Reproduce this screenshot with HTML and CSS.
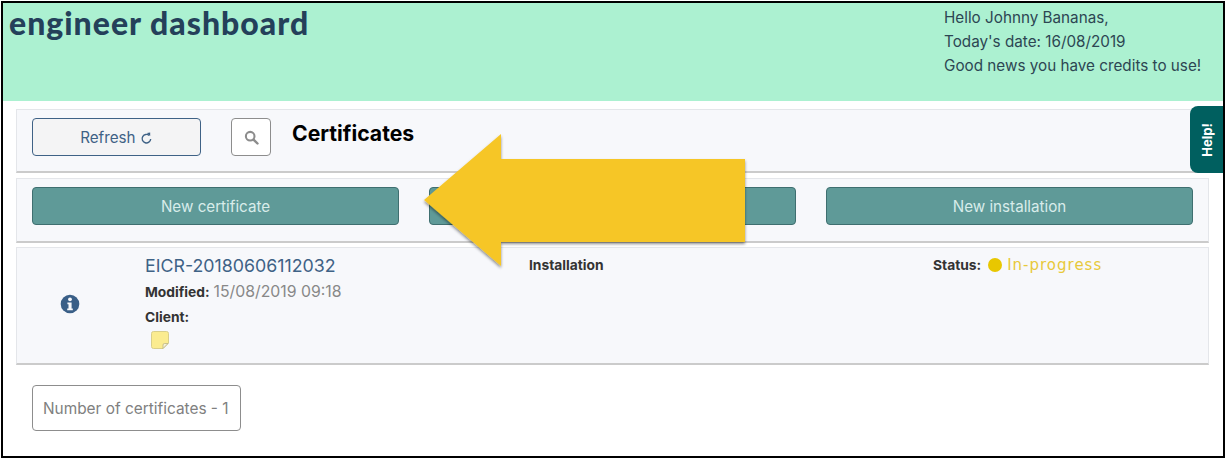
FILE: index.html
```html
<!DOCTYPE html>
<html>

<head>
  <title>Engineer dashboard</title>
  <link rel="stylesheet" href="styles.css">
</head>

<body>
  <div class="frame">
    <div class="top-header">
      <h1 class="brand">engineer dashboard</h1>
      <div class="greeting">
        <div>Hello Johnny Bananas,</div>
        <div>Today's date: 16/08/2019</div>
        <div>Good news you have credits to use!</div>
      </div>
    </div>

    <div class="content">
      <div class="panel toolbar">
        <button class="btn-refresh">Refresh
          <svg class="refresh-icon" viewBox="0 0 14 14" width="13" height="13">
            <path d="M11.5 7.5a4.6 4.6 0 1 1-1.5-3.7" fill="none" stroke="#3f6286" stroke-width="1.5" />
            <path d="M7.4 1.2l3.6-.6v3.8z" fill="#3f6286" />
          </svg>
        </button>
        <button class="btn-search">
          <svg viewBox="0 0 16 16" width="15" height="15">
            <circle cx="6.6" cy="6.6" r="4.6" fill="none" stroke="#8c8c8c" stroke-width="2.2" />
            <path d="M10.2 10.2l4.2 4.2" stroke="#8c8c8c" stroke-width="2.6" stroke-linecap="round" />
          </svg>
        </button>
        <h2 class="page-title">Certificates</h2>
      </div>

      <div class="panel actions">
        <button class="btn-new">New certificate</button>
        <button class="btn-new">New client</button>
        <button class="btn-new">New installation</button>
      </div>

      <div class="panel cert-row">
        <div class="cert-icon">
          <svg viewBox="0 0 20 20" width="20" height="20">
            <circle cx="10" cy="10" r="9.3" fill="#3a5f87" />
            <circle cx="10" cy="5.3" r="1.9" fill="#f7f8fa" />
            <path d="M7.4 8.4h4.2v6h1.2v1.8H7.2v-1.8h1.3v-4.2H7.4z" fill="#f7f8fa" />
          </svg>
        </div>
        <div class="cert-main">
          <a class="cert-name">EICR-20180606112032</a>
          <div class="cert-line"><b>Modified:</b> <span class="muted">15/08/2019 09:18</span></div>
          <div class="cert-line client"><b>Client:</b></div>
          <svg class="note" viewBox="0 0 18 18" width="18" height="18">
            <path d="M2.5 .5h13a2 2 0 0 1 2 2V12l-5.500 5.500h-9.500a2 2 0 0 1-2-2v-13a2 2 0 0 1 2-2z" fill="#fbec8f" stroke="#d9cf8a" />
            <path d="M17 12.500h-3.500a1.500 1.500 0 0 0-1.500 1.500v3.500z" fill="#f4f1d8" stroke="#b5ad7e" stroke-width=".7" />
          </svg>
        </div>
        <div class="cert-type"><b>Installation</b></div>
        <div class="cert-status">
          <b>Status:</b>
          <span class="dot"></span>
          <span class="status-text">In-progress</span>
        </div>
      </div>

      <div class="count-box">Number of certificates - 1</div>
    </div>

    <div class="help-tab"><span>Help!</span></div>

    <svg class="arrow" viewBox="0 0 340 150" width="340" height="150">
      <defs>
        <filter id="arrow-shadow" x="-5%" y="-5%" width="110%" height="115%">
          <feDropShadow dx="0" dy="2" stdDeviation="1.500" flood-color="#000" flood-opacity="0.45" />
        </filter>
      </defs>
      <path d="M4 68L81 2V27H325V110H81V134z" fill="#f6c628" filter="url(#arrow-shadow)" />
    </svg>
  </div>
</body>

</html>
```

FILE: styles.css
```css
* {
  box-sizing: border-box;
}

body {
  margin: 0;
  font-family: Inter, "Liberation Sans", sans-serif;
  color: #333;
  background-color: #fff;
}

.frame {
  position: relative;
  height: 457px;
  margin: 1px 2px 0 1px;
  border: 2px solid #000;
  overflow: hidden;
}

.top-header {
  display: flex;
  justify-content: space-between;
  height: 98px;
  padding-left: 6px;
  background-color: #acf1d1;
}

.brand {
  margin: 0;
  font-family: Lato, sans-serif;
  font-size: 32px;
  font-weight: 900;
  letter-spacing: 1px;
  line-height: 40px;
  color: #24405a;
}

.greeting {
  width: 279px;
  padding-top: 3px;
  font-size: 15.250px;
  line-height: 24px;
  color: #2d4653;
}

.content {
  padding: 8px 14px 0 13px;
}

.panel {
  background-color: #f7f8fb;
  border: 1px solid #e4e6ea;
  border-bottom: 2px solid #cbcbcb;
}

.toolbar {
  display: flex;
  align-items: flex-start;
  height: 64px;
  padding: 8px 15px;
}

.btn-refresh {
  width: 169px;
  height: 38px;
  font-family: inherit;
  font-size: 15.200px;
  color: #3f6286;
  background-color: #f4f4f5;
  border: 1px solid #3f6286;
  border-radius: 4px;
}

.refresh-icon {
  vertical-align: -2px;
}

.btn-search {
  display: flex;
  align-items: center;
  justify-content: center;
  width: 40px;
  height: 38px;
  margin-left: 30px;
  background-color: #fff;
  border: 1px solid #8d8d8d;
  border-radius: 4px;
}

.page-title {
  margin: 3px 0 0 21px;
  font-size: 21.200px;
  font-weight: bold;
  line-height: 24px;
  color: #000;
}

.actions {
  display: grid;
  grid-template-columns: 367px 367px 367px;
  gap: 30px;
  height: 65px;
  margin-top: 5px;
  padding: 8px 15px;
}

.btn-new {
  height: 38px;
  font-family: inherit;
  font-size: 15.200px;
  color: #d8ecea;
  background-color: #5f9a98;
  border: 1px solid #3f6f70;
  border-radius: 4px;
}

.cert-row {
  display: grid;
  grid-template-columns: 128px 384px 404px 1fr;
  height: 118px;
  margin-top: 4px;
  font-size: 13.800px;
}

.cert-icon {
  display: flex;
  align-items: center;
  justify-content: center;
  padding-right: 22px;
  padding-bottom: 4px;
}

.cert-main {
  padding-top: 7px;
}

.cert-name {
  display: block;
  font-size: 17.800px;
  line-height: 22px;
  color: #3f6286;
}

.cert-line {
  margin-top: 5px;
  line-height: 20px;
}

.cert-line.client {
  margin-top: 5px;
}

.muted {
  font-size: 15.800px;
  color: #888;
}

.note {
  display: block;
  margin: 4px 0 0 6px;
}

.cert-type {
  padding-top: 7px;
  line-height: 20px;
}

.cert-status {
  display: flex;
  align-items: center;
  height: 20px;
  margin-top: 7px;
}

.dot {
  width: 14px;
  height: 14px;
  margin: 0 5px 0 7px;
  background-color: #e8c700;
  border-radius: 50%;
}

.status-text {
  font-family: "DejaVu Sans", sans-serif;
  font-size: 15px;
  letter-spacing: 1px;
  color: #e8c93a;
}

.count-box {
  display: flex;
  align-items: center;
  width: 209px;
  height: 46px;
  margin: 20px 0 0 16px;
  padding-left: 10px;
  font-size: 15.400px;
  color: #808080;
  background-color: #fff;
  border: 1px solid #8d8d8d;
  border-radius: 4px;
}

.help-tab {
  position: absolute;
  top: 103px;
  right: 0;
  display: flex;
  align-items: center;
  justify-content: center;
  width: 33px;
  height: 67px;
  background-color: #005f5f;
  border-radius: 8px 0 0 8px;
}

.help-tab span {
  transform: rotate(-90deg);
  font-size: 13px;
  font-weight: bold;
  color: #fff;
}

.arrow {
  position: absolute;
  top: 129px;
  left: 417px;
}
```
